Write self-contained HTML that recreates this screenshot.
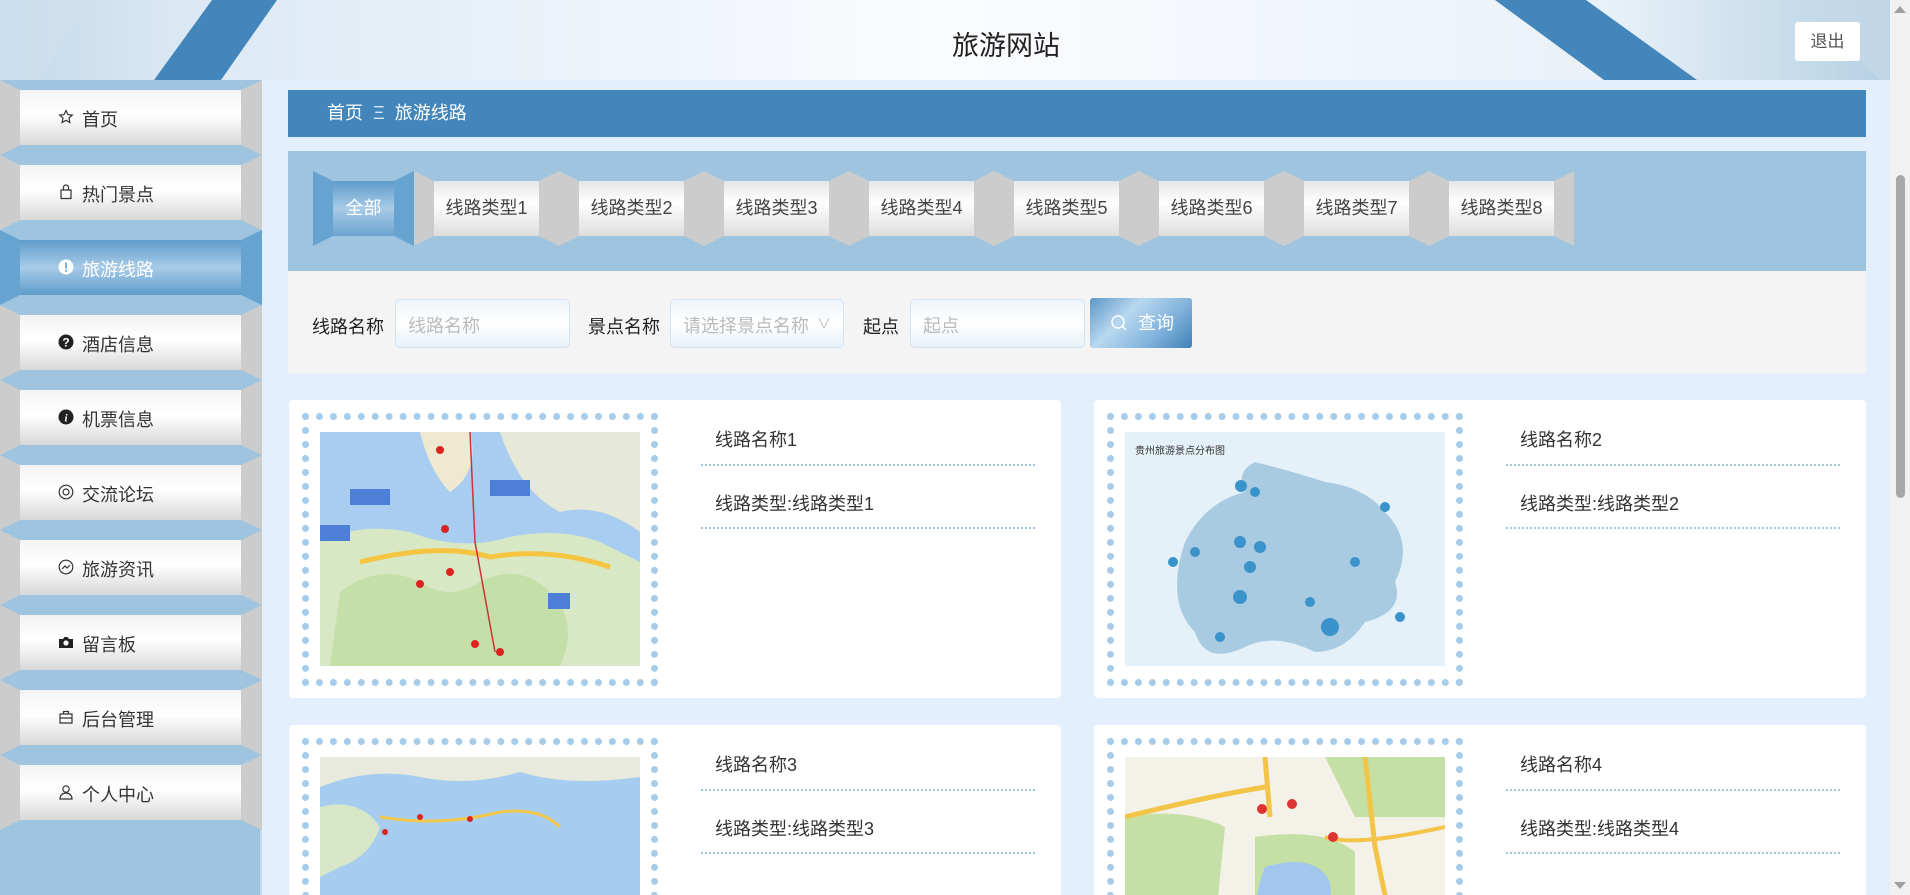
<!DOCTYPE html>
<html style="width:1910px;height:895px;overflow:hidden"><head><meta charset="utf-8"><style>
*{margin:0;padding:0;box-sizing:border-box}
body{width:1910px;height:895px;overflow:hidden;background:#e3effd;font-family:"Liberation Sans","Noto Sans CJK SC",sans-serif;position:relative}
#wrap{position:absolute;left:0;top:0;width:1910px;height:895px;overflow:hidden}
.hdr{position:absolute;left:0;top:0;width:1890px;height:80px;border-bottom:1px solid #b8d4ee}
.title{position:absolute;left:952px;top:24px;font-size:27px;color:#222}
.logout{position:absolute;left:1795px;top:22px;width:65px;height:39px;background:#fff;border-radius:3px;font-size:17px;color:#555;text-align:center;line-height:39px}
.sb{position:absolute;left:0;top:80px;width:262px;height:815px;background:#9ec4e0;border-right:2px solid #c9d9e9}
.it{position:absolute;left:0;width:262px;height:75px;border-style:solid;border-width:10px 21px 10px 20px;border-color:#9ec4e0 #ccc #9ec4e0 #ccc;background:linear-gradient(#f3f3f3,#fff 45%,#d8d8d8)}
.it span{position:absolute;left:62px;top:16px;font-size:18px;color:#333;white-space:nowrap}
.it i{position:absolute;left:38px;top:19px;width:16px;height:16px;font-style:normal}
.it.act{border-color:#9ec4e0 #67a3d0 #9ec4e0 #67a3d0;background:linear-gradient(#5f9ccc,#a8cbe7 50%,#5f9ccc)}
.it.act span{color:#fff}
.crumb{position:absolute;left:288px;top:90px;width:1578px;height:47px;background:#4386bb;color:#fff;font-size:18px;line-height:47px;padding-left:39px}
.fbox{position:absolute;left:288px;top:151px;width:1578px;height:222px;background:#f4f4f4}
.fblue{height:120px;background:#9ec4e0;position:relative}
.tab{position:absolute;top:20px;height:75px;border-style:solid;border-width:10px 20px;border-color:#9ec4e0 #ccc;background:linear-gradient(#e6e6e6,#fff 40%,#dedede);font-size:18px;color:#444;text-align:center;line-height:55px;white-space:nowrap}
.tab.act{border-color:#9ec4e0 #67a3d0;background:linear-gradient(#5f9ccc,#a8cbe7 50%,#6aa3d0);color:#fff}
.lbl{position:absolute;top:162px;font-size:18px;color:#222}
.inp{position:absolute;top:148px;height:49px;border:1px solid #d6e4f2;border-radius:5px;background:linear-gradient(#eef4fa,#fff 50%,#e8f1fa);font-size:18px;color:#bbb;padding:12px 12px;white-space:nowrap;overflow:hidden}
.btn{position:absolute;left:802px;top:147px;width:102px;height:50px;border-radius:3px;background:linear-gradient(135deg,#5b97c9,#b9d8ef 35%,#7db0da 70%,#3f7fb5);color:#fff;font-size:18px;line-height:50px;padding-left:48px}
.card{position:absolute;width:772px;height:298px;background:#fff;border-radius:4px}
.frame{position:absolute;left:13px;top:13px;width:356px;height:273px;border:7px dotted #a6cce9}
.map{position:absolute;left:31px;top:32px;width:320px;height:234px;overflow:hidden}
.t1{position:absolute;left:426px;top:26px;font-size:18px;color:#333}
.t2{position:absolute;left:426px;top:90px;font-size:18px;color:#333}
.l1,.l2{position:absolute;left:412px;width:334px;border-top:2px dotted #a6c8dd}
.l1{top:64px}.l2{top:127px}
.scr{position:absolute;left:1890px;top:0;width:20px;height:895px;background:#f1f1f1}
.thumb{position:absolute;left:1896px;top:175px;width:9px;height:323px;background:#a8a8a8;border-radius:5px}
</style></head><body><div id="wrap">
<div class="hdr">
<svg width="1890" height="80" style="position:absolute;left:0;top:0">
<defs><linearGradient id="hg" x1="0" x2="1"><stop offset="0" stop-color="#c3d9ea"/><stop offset=".1" stop-color="#dce9f4"/><stop offset=".5" stop-color="#fbfcfe"/><stop offset=".85" stop-color="#e9f1f8"/><stop offset="1" stop-color="#b5d1e3"/></linearGradient></defs>
<rect width="1890" height="80" fill="url(#hg)"/>
<polygon points="0,0 90,0 40,80 0,80" fill="#d0e1ee" opacity=".6"/>
<polygon points="212,0 277,0 221,80 154,80" fill="#4386bb"/>
<polygon points="1495,0 1586,0 1697,80 1604,80" fill="#4386bb"/>
<polygon points="1800,0 1890,0 1890,90" fill="#c8d8e8" opacity=".6"/>
</svg>
<div class="title">旅游网站</div>
<div class="logout">退出</div>
</div>
<div class="sb">
<div class="it" style="top:0"><i><svg width="16" height="16" viewBox="0 0 16 16"><path d="M8 1.5l1.9 4.1 4.4.5-3.3 3 .9 4.4L8 11.3l-3.9 2.2.9-4.4-3.3-3 4.4-.5z" fill="none" stroke="#333" stroke-width="1.2"/></svg></i><span>首页</span></div>
<div class="it" style="top:75px"><i><svg width="16" height="16" viewBox="0 0 16 16"><path d="M3 6h10v8.5H3zM5.5 6V3.5a2.5 2.5 0 0 1 5 0V6" fill="none" stroke="#333" stroke-width="1.2"/></svg></i><span>热门景点</span></div>
<div class="it act" style="top:150px"><i><svg width="16" height="16"><circle cx="8" cy="8" r="7.5" fill="#fff"/><rect x="7" y="3.5" width="2" height="6" fill="#7eb0d8"/><rect x="7" y="10.8" width="2" height="2" fill="#7eb0d8"/></svg></i><span>旅游线路</span></div>
<div class="it" style="top:225px"><i><svg width="16" height="16"><circle cx="8" cy="8" r="7.5" fill="#222"/><text x="8" y="12.5" font-size="12" fill="#fff" text-anchor="middle" font-weight="bold" font-family="Liberation Sans">?</text></svg></i><span>酒店信息</span></div>
<div class="it" style="top:300px"><i><svg width="16" height="16"><circle cx="8" cy="8" r="7.5" fill="#222"/><text x="8" y="12.5" font-size="11" fill="#fff" text-anchor="middle" font-style="italic" font-weight="bold" font-family="Liberation Serif">i</text></svg></i><span>机票信息</span></div>
<div class="it" style="top:375px"><i><svg width="16" height="16"><circle cx="8" cy="8" r="6.8" fill="none" stroke="#333" stroke-width="1.2"/><circle cx="8" cy="8" r="3" fill="none" stroke="#333" stroke-width="1.2"/></svg></i><span>交流论坛</span></div>
<div class="it" style="top:450px"><i><svg width="16" height="16"><circle cx="8" cy="8" r="6.8" fill="none" stroke="#333" stroke-width="1.2"/><path d="M4 10l3-3 2 2 3-3" fill="none" stroke="#333" stroke-width="1.2"/></svg></i><span>旅游资讯</span></div>
<div class="it" style="top:525px"><i><svg width="16" height="16"><path d="M1 5h4l1.5-2h3L11 5h4v9H1z" fill="#222"/><circle cx="8" cy="9" r="2.6" fill="#fff"/></svg></i><span>留言板</span></div>
<div class="it" style="top:600px"><i><svg width="16" height="16"><path d="M2 5h12v9H2zM5.5 5V2.5h5V5M2 9h12" fill="none" stroke="#333" stroke-width="1.2"/></svg></i><span>后台管理</span></div>
<div class="it" style="top:675px"><i><svg width="16" height="16"><circle cx="8" cy="5" r="3.2" fill="none" stroke="#333" stroke-width="1.2"/><path d="M2 15c0-4 3-6 6-6s6 2 6 6z" fill="none" stroke="#333" stroke-width="1.2"/></svg></i><span>个人中心</span></div>
</div>
<div class="crumb">首页 &nbsp;<span style="opacity:.8">Ξ</span>&nbsp; 旅游线路</div>
<div class="fbox">
<div class="fblue">
<div class="tab act" style="left:25px;width:101px">全部</div>
<div class="tab" style="left:126px;width:145px">线路类型1</div>
<div class="tab" style="left:271px;width:145px">线路类型2</div>
<div class="tab" style="left:416px;width:145px">线路类型3</div>
<div class="tab" style="left:561px;width:145px">线路类型4</div>
<div class="tab" style="left:706px;width:145px">线路类型5</div>
<div class="tab" style="left:851px;width:145px">线路类型6</div>
<div class="tab" style="left:996px;width:145px">线路类型7</div>
<div class="tab" style="left:1141px;width:145px">线路类型8</div>
</div>
<div class="lbl" style="left:24px">线路名称</div>
<div class="inp" style="left:107px;width:175px">线路名称</div>
<div class="lbl" style="left:300px">景点名称</div>
<div class="inp" style="left:382px;width:174px">请选择景点名称<span style="position:absolute;right:12px;top:14px;font-size:14px">∨</span></div>
<div class="lbl" style="left:575px">起点</div>
<div class="inp" style="left:622px;width:175px">起点</div>
<div class="btn"><svg width="18" height="18" style="position:absolute;left:20px;top:16px"><circle cx="8" cy="8" r="6" fill="none" stroke="#fff" stroke-width="1.5"/><path d="M12.5 12.5l3.5 3.5" stroke="#fff" stroke-width="1.5"/></svg>查询</div>
</div>

<div class="card" style="left:289px;top:400px">
<div class="frame"></div>
<div class="map"><svg width="320" height="234"><rect width="320" height="234" fill="#a9cdf0"/>
<path d="M0 110 Q40 90 90 100 Q140 120 190 105 Q240 95 280 110 L320 130 L320 234 L0 234Z" fill="#d8e8c4"/>
<path d="M20 160 Q60 130 100 150 Q130 170 160 150 Q200 130 230 160 Q260 190 240 234 L10 234Z" fill="#c4dfa8"/>
<path d="M180 0 L320 0 L320 100 Q280 70 240 80 Q200 60 180 0Z" fill="#e6e9d8"/>
<path d="M100 0 L150 0 Q160 40 130 60 Q110 40 100 0Z" fill="#efe9d2"/>
<path d="M40 130 Q120 110 170 125 Q230 115 290 135" stroke="#f5c542" stroke-width="5" fill="none"/>
<path d="M150 0 L155 110 L175 220" stroke="#c33" stroke-width="1.5" fill="none"/>
<rect x="30" y="57" width="40" height="16" fill="#4d7fd6"/><rect x="170" y="48" width="40" height="16" fill="#4d7fd6"/><rect x="0" y="93" width="30" height="16" fill="#4d7fd6"/><rect x="228" y="161" width="22" height="16" fill="#4d7fd6"/>
<circle cx="120" cy="18" r="4" fill="#d22"/><circle cx="125" cy="97" r="4" fill="#d22"/><circle cx="130" cy="140" r="4" fill="#d22"/><circle cx="100" cy="152" r="4" fill="#d22"/><circle cx="155" cy="212" r="4" fill="#d22"/><circle cx="180" cy="220" r="4" fill="#d22"/></svg></div>
<div class="t1">线路名称1</div><div class="l1"></div><div class="t2">线路类型:线路类型1</div><div class="l2"></div>
</div>

<div class="card" style="left:1094px;top:400px">
<div class="frame"></div>
<div class="map"><svg width="320" height="234"><rect width="320" height="234" fill="#e4f1f8"/>
<path d="M60 110 Q80 70 120 60 Q110 40 130 30 Q170 40 200 50 Q240 55 260 80 Q290 110 270 150 Q280 180 240 190 Q220 220 190 220 Q150 200 120 215 Q80 234 70 200 Q40 170 60 110Z" fill="#a9cbe2"/>
<g fill="#3b93cc"><circle cx="116" cy="54" r="6"/><circle cx="130" cy="60" r="5"/><circle cx="115" cy="110" r="6"/><circle cx="135" cy="115" r="6"/><circle cx="125" cy="135" r="6"/><circle cx="115" cy="165" r="7"/><circle cx="205" cy="195" r="9"/><circle cx="48" cy="130" r="5"/><circle cx="230" cy="130" r="5"/><circle cx="260" cy="75" r="5"/><circle cx="95" cy="205" r="5"/><circle cx="185" cy="170" r="5"/><circle cx="275" cy="185" r="5"/><circle cx="70" cy="120" r="5"/></g>
<text x="10" y="22" font-size="10" fill="#333">贵州旅游景点分布图</text></svg></div>
<div class="t1">线路名称2</div><div class="l1"></div><div class="t2">线路类型:线路类型2</div><div class="l2"></div>
</div>

<div class="card" style="left:289px;top:725px">
<div class="frame"></div>
<div class="map"><svg width="320" height="234"><rect width="320" height="234" fill="#a6cdef"/>
<path d="M0 0 L320 0 L320 20 Q250 30 200 15 Q150 30 100 20 Q50 10 0 30Z" fill="#e7eadc"/>
<path d="M0 50 Q40 40 60 70 Q50 100 20 110 L0 120Z" fill="#d6e6c6"/>
<path d="M60 60 Q120 70 180 55 Q220 50 240 70" stroke="#f3c64c" stroke-width="3" fill="none"/>
<circle cx="65" cy="75" r="3" fill="#d22"/><circle cx="100" cy="60" r="3" fill="#d22"/><circle cx="150" cy="62" r="3" fill="#d22"/></svg></div>
<div class="t1">线路名称3</div><div class="l1"></div><div class="t2">线路类型:线路类型3</div><div class="l2"></div>
</div>

<div class="card" style="left:1094px;top:725px">
<div class="frame"></div>
<div class="map"><svg width="320" height="234"><rect width="320" height="234" fill="#f4f1e8"/>
<path d="M0 60 Q60 50 100 70 L90 170 L0 170Z" fill="#c4e0a4"/>
<path d="M200 0 L320 0 L320 60 L230 60Z" fill="#c4e0a4"/>
<path d="M130 80 Q200 70 230 95 L230 150 L130 150Z" fill="#c4e0a4"/>
<path d="M140 110 Q190 95 205 125 L210 200 Q170 210 150 180 Q120 160 140 110Z" fill="#a3c6ef"/>
<path d="M0 60 Q80 40 140 30 M140 0 L145 60 M240 0 L250 90 L280 234" stroke="#f2c448" stroke-width="5" fill="none"/>
<path d="M200 80 Q230 90 320 70" stroke="#f2c448" stroke-width="4" fill="none"/>
<circle cx="137" cy="52" r="5" fill="#d33"/><circle cx="167" cy="47" r="5" fill="#d33"/><circle cx="208" cy="80" r="5" fill="#d33"/></svg></div>
<div class="t1">线路名称4</div><div class="l1"></div><div class="t2">线路类型:线路类型4</div><div class="l2"></div>
</div>

<div class="scr"></div><div class="thumb"></div>
<div style="position:absolute;left:1894px;top:6px;width:0;height:0;border:6px solid transparent;border-bottom:7px solid #a0a0a0;border-top:0"></div>
<div style="position:absolute;left:1894px;top:882px;width:0;height:0;border:6px solid transparent;border-top:7px solid #a0a0a0;border-bottom:0"></div>
</div></body></html>
